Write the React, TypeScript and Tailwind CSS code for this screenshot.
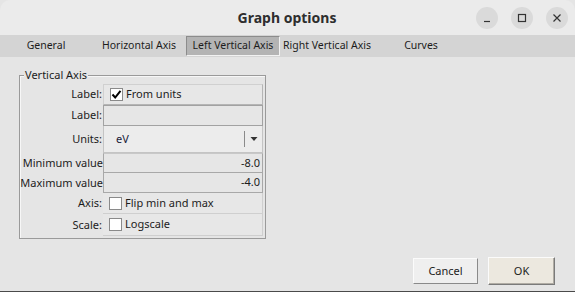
import React from "react";

const font = { fontFamily: '"Noto Sans", "DejaVu Sans", sans-serif' };

function CheckBox({ checked }: { checked?: boolean }) {
  return (
    <div className="w-[13px] h-[13px] bg-white border border-[#8a8a8a] flex items-center justify-center shrink-0">
      {checked && (
        <svg width="11" height="11" viewBox="0 0 11 11">
          <path d="M1.5 5.5 L4.2 8.5 L9.5 1.8" fill="none" stroke="#000" strokeWidth="2" />
        </svg>
      )}
    </div>
  );
}

function WinButton({ children }: { children: React.ReactNode }) {
  return (
    <div className="w-[22px] h-[22px] rounded-full bg-[#dadada] flex items-center justify-center">
      {children}
    </div>
  );
}

const tabs = ["General", "Horizontal Axis", "Left Vertical Axis", "Right Vertical Axis", "Curves"];

export default function App() {
  return (
    <div className="w-[575px] h-[292px] bg-[#e5e5e5] flex flex-col overflow-hidden text-[#1c1c1c]" style={font}>
      {/* title bar */}
      <div className="h-[35px] bg-[#ebebeb] rounded-t-[10px] flex items-center shrink-0">
        <div className="flex-1 pl-[98px] text-center text-[14px] font-bold text-[#2e2e2e]">Graph options</div>
        <div className="flex items-center gap-[13px] pr-[7px]">
          <WinButton>
            <svg width="10" height="10" viewBox="0 0 10 10">
              <path d="M2 8.5 H8" stroke="#333" strokeWidth="1.2" />
            </svg>
          </WinButton>
          <WinButton>
            <svg width="10" height="10" viewBox="0 0 10 10">
              <rect x="1.5" y="1.5" width="7" height="7" fill="none" stroke="#333" strokeWidth="1.2" />
            </svg>
          </WinButton>
          <WinButton>
            <svg width="10" height="10" viewBox="0 0 10 10">
              <path d="M1.5 1.5 L8.5 8.5 M8.5 1.5 L1.5 8.5" stroke="#333" strokeWidth="1.2" />
            </svg>
          </WinButton>
        </div>
      </div>

      {/* tab bar */}
      <div className="h-[22px] bg-[#d4d4d4] flex items-center shrink-0 text-[10.5px]">
        {tabs.map((t, i) => (
          <div
            key={t}
            className={
              t === "Left Vertical Axis"
                ? "w-[94px] h-[20px] flex items-center justify-center whitespace-nowrap bg-[#b4b4b4] border-l border-t border-[#8c8c8c] border-r-[#f2f2f2] border-r border-b border-b-[#f2f2f2]"
                : i === 0
                ? "w-[92px] h-[20px] flex items-center justify-center whitespace-nowrap"
                : "w-[94px] h-[20px] flex items-center justify-center whitespace-nowrap"
            }
          >
            {t}
          </div>
        ))}
      </div>

      {/* content */}
      <div className="flex-1 relative">
        <div className="absolute left-[19px] top-[18px] w-[247px] h-[164px] border border-[#9a9a9a] shadow-[inset_1px_1px_0_#f7f7f7]">
          <div className="absolute left-[4px] top-[-9px] bg-[#e5e5e5] px-[1px] text-[11px] leading-[16px]">Vertical Axis</div>
          <div className="grid grid-cols-[83px_160px] mt-[8px] text-[11px]">
            <div className="h-[21px] flex items-center justify-end pr-[1px]">Label:</div>
            <div className="h-[21px] flex items-center gap-[3px] pl-[6px] bg-[#e7e7e7] border border-[#d0d0d0] border-r-[#b5b5b5] border-b-[#b5b5b5]">
              <CheckBox checked />
              <span>From units</span>
            </div>

            <div className="h-[21px] flex items-center justify-end pr-[1px]">Label:</div>
            <div className="h-[21px] bg-[#e6e6e6] border border-[#a2a2a2]" />

            <div className="h-[27px] flex items-center justify-end pr-[1px]">Units:</div>
            <div className="h-[27px] flex items-center bg-[#ececec] border-x border-b border-[#c4c4c4]">
              <span className="flex-1 pl-[12px] text-[#1a1a3a]">eV</span>
              <div className="w-px h-[16px] bg-[#8a8a8a]" />
              <div className="w-[17px] flex justify-center">
                <svg width="8" height="6" viewBox="0 0 8 6">
                  <path d="M0.5 1 H7.5 L4 5 Z" fill="#333" />
                </svg>
              </div>
            </div>

            <div className="h-[20px] flex items-center justify-end">Minimum value</div>
            <div className="h-[20px] flex items-center justify-end pr-[2px] bg-[#e6e6e6] border border-[#a8a8a8] border-t-[#c8c8c8]">-8.0</div>

            <div className="h-[20px] flex items-center justify-end">Maximum value</div>
            <div className="h-[20px] flex items-center justify-end pr-[2px] bg-[#e6e6e6] border-x border-b border-[#a8a8a8]">-4.0</div>

            <div className="h-[21px] flex items-center justify-end pr-[1px]">Axis:</div>
            <div className="h-[21px] flex items-center gap-[3px] pl-[6px] bg-[#e7e7e7] border-b border-r border-[#cfcfcf]">
              <CheckBox />
              <span>Flip min and max</span>
            </div>

            <div className="h-[22px] flex items-center justify-end pr-[1px]">Scale:</div>
            <div className="h-[22px] flex items-center gap-[3px] pl-[6px] bg-[#e7e7e7] border-b border-r border-[#cfcfcf]">
              <CheckBox />
              <span>Logscale</span>
            </div>
          </div>
        </div>

        <div className="absolute right-[20px] bottom-[6px] flex items-end gap-[10px] text-[11px]">
          <div className="w-[65px] h-[26px] mb-[1px] flex items-center justify-center bg-[#efefef] border border-[#fbfbfb] border-r-[#8a8a8a] border-b-[#8a8a8a]">Cancel</div>
          <div className="w-[67px] h-[28px] flex items-center justify-center bg-[#ece8df] border border-[#fbfbfb] border-r-[#7a7a7a] border-b-[#7a7a7a] shadow-[inset_-1px_-1px_0_#b0aca4]">OK</div>
        </div>
      </div>
      <div className="h-px bg-[#4a4a4a] shrink-0" />
    </div>
  );
}
